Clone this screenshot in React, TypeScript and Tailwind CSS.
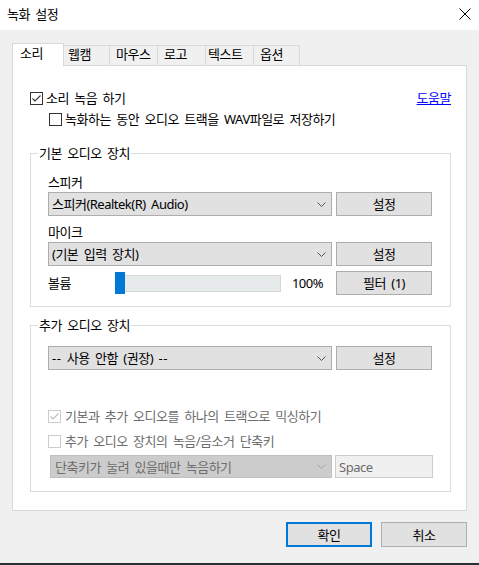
import React from 'react';

const FONT = "font-['Noto_Sans','Noto_Sans_CJK_KR',sans-serif] text-[13px] tracking-[-0.5px] [word-spacing:2.5px] leading-[16px]";

const TABS = [
    { label: '웹캠', w: 'w-[46px]', pl: 'pl-[4px]' },
    { label: '마우스', w: 'w-[48px]', pl: 'pl-[6px]' },
    { label: '로고', w: 'w-[48px]', pl: 'pl-[6px]' },
    { label: '텍스트', w: 'w-[48px]', pl: 'pl-[2px]' },
    { label: '옵션', w: 'w-[46px]', pl: 'pl-[6px]' },
];

function CheckBox({ checked, disabled }: { checked?: boolean; disabled?: boolean }) {
    return (
        <span
            className={
                'flex h-[13px] w-[13px] shrink-0 items-center justify-center border bg-white ' +
                (disabled ? 'border-[#cccccc]' : 'border-[#333333]')
            }
        >
            {checked && (
                <svg width="11" height="11" viewBox="0 0 11 11">
                    <path
                        d="M1.5 5.5 L4 8 L9.5 2.5"
                        fill="none"
                        stroke={disabled ? '#bcbcbc' : '#333333'}
                        strokeWidth="1.1"
                    />
                </svg>
            )}
        </span>
    );
}

function Chevron({ color = '#555555' }: { color?: string }) {
    return (
        <svg width="9" height="5" viewBox="0 0 9 5" className="shrink-0">
            <path d="M0.5 0.5 L4.5 4.5 L8.5 0.5" fill="none" stroke={color} strokeWidth="1" />
        </svg>
    );
}

function Select({ children }: { children: React.ReactNode }) {
    return (
        <div className="flex h-[24px] w-[284px] items-center justify-between border border-[#adadad] bg-[#e1e1e1] pl-[3px] pr-[5px]">
            <span className="whitespace-nowrap">{children}</span>
            <Chevron />
        </div>
    );
}

function Button({ children }: { children: React.ReactNode }) {
    return (
        <div className="flex h-[24px] w-[96px] items-center justify-center border border-[#adadad] bg-[#e1e1e1]">
            {children}
        </div>
    );
}

function Legend({ children }: { children: React.ReactNode }) {
    return <span className="-mt-[9px] -ml-[10px] self-start bg-white px-[1px]">{children}</span>;
}

export default function App() {
    return (
        <div className={'flex h-[565px] w-[479px] flex-col bg-[#f0f0f0] text-black ' + FONT}>

            {/* Title bar */}
            <div className="flex h-[30px] items-center justify-between bg-white pl-[7px] pr-[8px]">
                <span className="-mt-[2px]">녹화 설정</span>
                <svg width="12" height="12" viewBox="0 0 12 12" className="-mt-[2px]">
                    <path d="M0.5 0.5 L11.5 11.5 M11.5 0.5 L0.5 11.5" stroke="#000" strokeWidth="1" />
                </svg>
            </div>

            <div className="flex flex-1 flex-col px-[12px] pt-[13px]">

                {/* Tabs */}
                <div className="flex h-[22px] items-end">
                    <div className="relative z-10 -mb-[1px] h-[23px] w-[52px] border-x border-t border-[#d9d9d9] bg-white pl-[7px] pt-[1px]">
                        소리
                    </div>
                    {TABS.map((t) => (
                        <div
                            key={t.label}
                            className={'h-[20px] border-r border-t border-[#d9d9d9] bg-[#f0f0f0] ' + t.w + ' ' + t.pl}
                        >
                            {t.label}
                        </div>
                    ))}
                </div>

                {/* Panel */}
                <div className="flex h-[446px] w-[455px] flex-col border border-[#d9d9d9] bg-white pl-[17px] pr-[15px] pt-[24px]">

                    <div className="flex h-[16px] items-center justify-between">
                        <div className="flex items-center gap-[3px]">
                            <CheckBox checked />
                            <span>소리 녹음 하기</span>
                        </div>
                        <span className="text-[#0000ff] underline">도움말</span>
                    </div>

                    <div className="ml-[19px] mt-[5px] flex h-[16px] items-center gap-[3px]">
                        <CheckBox />
                        <span>녹화하는 동안 오디오 트랙을 WAV파일로 저장하기</span>
                    </div>

                    {/* Basic audio device */}
                    <div className="mt-[26px] flex w-[421px] flex-col border border-[#dcdcdc] pb-[11px] pl-[17px] pr-[17px]">
                        <Legend>기본 오디오 장치</Legend>

                        <span className="mt-[13px]">스피커</span>
                        <div className="mt-[2px] flex items-center gap-[4px]">
                            <Select>스피커(Realtek(R) Audio)</Select>
                            <Button>설정</Button>
                        </div>

                        <span className="mt-[8px]">마이크</span>
                        <div className="mt-[2px] flex items-center gap-[4px]">
                            <Select>(기본 입력 장치)</Select>
                            <Button>설정</Button>
                        </div>

                        <div className="mt-[5px] flex h-[24px] items-center">
                            <span className="w-[67px]">볼륨</span>
                            <div className="relative flex h-[22px] w-[166px] items-center">
                                <div className="h-[17px] w-full border border-[#d6d6d6] bg-[#e7eaea]" />
                                <div className="absolute left-0 top-0 h-[22px] w-[10px] bg-[#0078d7]" />
                            </div>
                            <span className="w-[55px] pr-[13px] text-right">100%</span>
                            <Button>필터 (1)</Button>
                        </div>
                    </div>

                    {/* Extra audio device */}
                    <div className="mt-[18px] flex w-[421px] flex-col border border-[#dcdcdc] pb-[13px] pl-[17px] pr-[17px]">
                        <Legend>추가 오디오 장치</Legend>

                        <div className="mt-[13px] flex items-center gap-[4px]">
                            <Select>
                                <span className="tracking-[0.5px]">--</span> 사용 안함 (권장) <span className="tracking-[0.5px]">--</span>
                            </Select>
                            <Button>설정</Button>
                        </div>

                        <div className="mt-[38px] flex h-[16px] items-center gap-[4px] text-[#6d6d6d]">
                            <CheckBox checked disabled />
                            <span>기본과 추가 오디오를 하나의 트랙으로 믹싱하기</span>
                        </div>
                        <div className="mt-[9px] flex h-[16px] items-center gap-[4px] text-[#6d6d6d]">
                            <CheckBox disabled />
                            <span>추가 오디오 장치의 녹음/음소거 단축키</span>
                        </div>

                        <div className="ml-[2px] mt-[6px] flex h-[23px] items-center gap-[3px] text-[#6d6d6d]">
                            <div className="flex h-[23px] w-[282px] items-center justify-between border border-[#bfbfbf] bg-[#cccccc] pl-[4px] pr-[5px]">
                                <span className="whitespace-nowrap">단축키가 눌려 있을때만 녹음하기</span>
                                <Chevron color="#a6a6a6" />
                            </div>
                            <div className="flex h-[23px] w-[98px] items-center border border-[#cccccc] bg-[#f0f0f0] pl-[3px]">
                                Space
                            </div>
                        </div>
                    </div>
                </div>

                {/* Dialog buttons */}
                <div className="mt-[11px] flex justify-end gap-[9px]">
                    <div className="flex h-[25px] w-[86px] items-center justify-center border-2 border-[#0078d7] bg-[#e1e1e1]">
                        확인
                    </div>
                    <div className="flex h-[25px] w-[86px] items-center justify-center border border-[#adadad] bg-[#e1e1e1]">
                        취소
                    </div>
                </div>
            </div>

            <div className="h-[2px] bg-[#2b3033]" />
        </div>
    );
}
